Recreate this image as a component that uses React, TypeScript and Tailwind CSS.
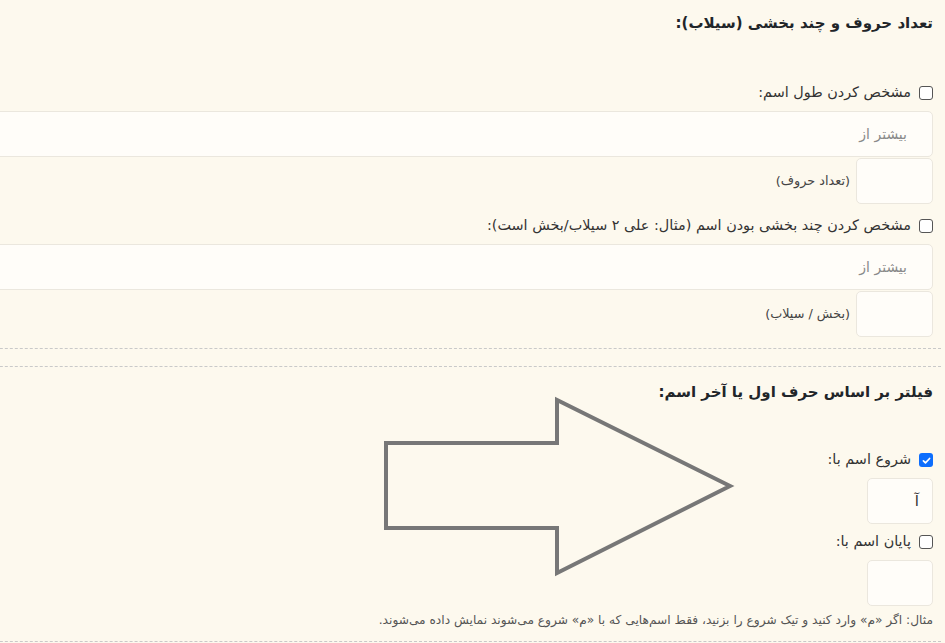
import type { ReactNode } from "react"

const font = { fontFamily: '"DejaVu Sans", sans-serif' }

function Box({ checked }: { checked?: boolean }) {
  if (checked) {
    return (
      <span className="flex h-[14px] w-[14px] shrink-0 items-center justify-center rounded-[3px] bg-[#0d6efd]">
        <svg viewBox="0 0 16 16" className="h-[11px] w-[11px]">
          <path d="M3.5 8.5l3 3 6-6.5" fill="none" stroke="#fff" strokeWidth="2.4" strokeLinecap="round" strokeLinejoin="round" />
        </svg>
      </span>
    )
  }
  return <span className="h-[14px] w-[14px] shrink-0 rounded-[3px] border border-[#555] bg-white" />
}

function CheckRow({ checked, children }: { checked?: boolean; children: ReactNode }) {
  return (
    <label className="flex h-5 items-center gap-[8px] text-[14.4px] text-[#333]">
      <Box checked={checked} />
      <span>{children}</span>
    </label>
  )
}

function WideInput({ placeholder }: { placeholder: string }) {
  return (
    <div className="flex h-[46px] items-center rounded-[5px] border border-[#ebe7de] bg-[#fffdf9] pr-[25px] text-[14px] text-[#8a8a8a]">
      {placeholder}
    </div>
  )
}

function SmallInput({ width, value, label }: { width: string; value?: string; label?: string }) {
  return (
    <div className="flex items-center gap-[6px]">
      <div
        className={`flex h-[46px] items-center rounded-[5px] border border-[#ebe7de] bg-[#fffdf9] pr-[13px] text-[15px] text-[#333] ${width}`}
      >
        {value}
      </div>
      {label && <span className="text-[12.8px] text-[#444]">{label}</span>}
    </div>
  )
}

export default function App() {
  return (
    <div dir="rtl" className="relative h-[643px] w-full overflow-hidden bg-[#fdf9ee] pr-[4px]" style={font}>
      {/* section 1 */}
      <section className="-ml-[80px] -mt-[3px] border-y border-dashed border-[#c9c9c9] pl-[8px] pr-[8px] pt-[12px] pb-[11px]">
        <h3 className="text-[15px] font-bold leading-[26px] text-[#212529]">تعداد حروف و چند بخشی (سیلاب):</h3>

        <div className="mt-[47px]">
          <CheckRow>مشخص کردن طول اسم:</CheckRow>
        </div>
        <div className="mt-[8px]">
          <WideInput placeholder="بیشتر از" />
        </div>
        <div className="mt-[1px]">
          <SmallInput width="w-[77px]" label="(تعداد حروف)" />
        </div>

        <div className="mt-[12px]">
          <CheckRow>مشخص کردن چند بخشی بودن اسم (مثال: علی ۲ سیلاب/بخش است):</CheckRow>
        </div>
        <div className="mt-[8px]">
          <WideInput placeholder="بیشتر از" />
        </div>
        <div className="mt-[1px]">
          <SmallInput width="w-[77px]" label="(بخش / سیلاب)" />
        </div>
      </section>

      {/* section 2 */}
      <section className="-ml-[80px] mt-[17px] border-y border-dashed border-[#c9c9c9] pl-[8px] pr-[8px] pt-[12px] pb-[13px]">
        <h3 className="text-[15px] font-bold leading-[26px] text-[#212529]">فیلتر بر اساس حرف اول یا آخر اسم:</h3>

        <div className="mt-[45px]">
          <CheckRow checked>شروع اسم با:</CheckRow>
        </div>
        <div className="mt-[8px]">
          <SmallInput width="w-[66px]" value="آ" />
        </div>
        <div className="mt-[8px]">
          <CheckRow>پایان اسم با:</CheckRow>
        </div>
        <div className="mt-[8px]">
          <SmallInput width="w-[66px]" />
        </div>
        <p className="mt-[6px] text-[12.2px] leading-[16px] text-[#555]">
          مثال: اگر «م» وارد کنید و تیک شروع را بزنید، فقط اسم‌هایی که با «م» شروع می‌شوند نمایش داده می‌شوند.
        </p>
      </section>

      {/* annotation arrow drawn over the page */}
      <svg className="pointer-events-none absolute left-[380px] top-[394px]" width="360" height="186" viewBox="380 394 360 186">
        <path
          d="M386 443 H557 V400 L730 486 L557 573 V528 H386 Z"
          fill="none"
          stroke="#777"
          strokeWidth="4"
          strokeLinejoin="miter"
        />
      </svg>
    </div>
  )
}
